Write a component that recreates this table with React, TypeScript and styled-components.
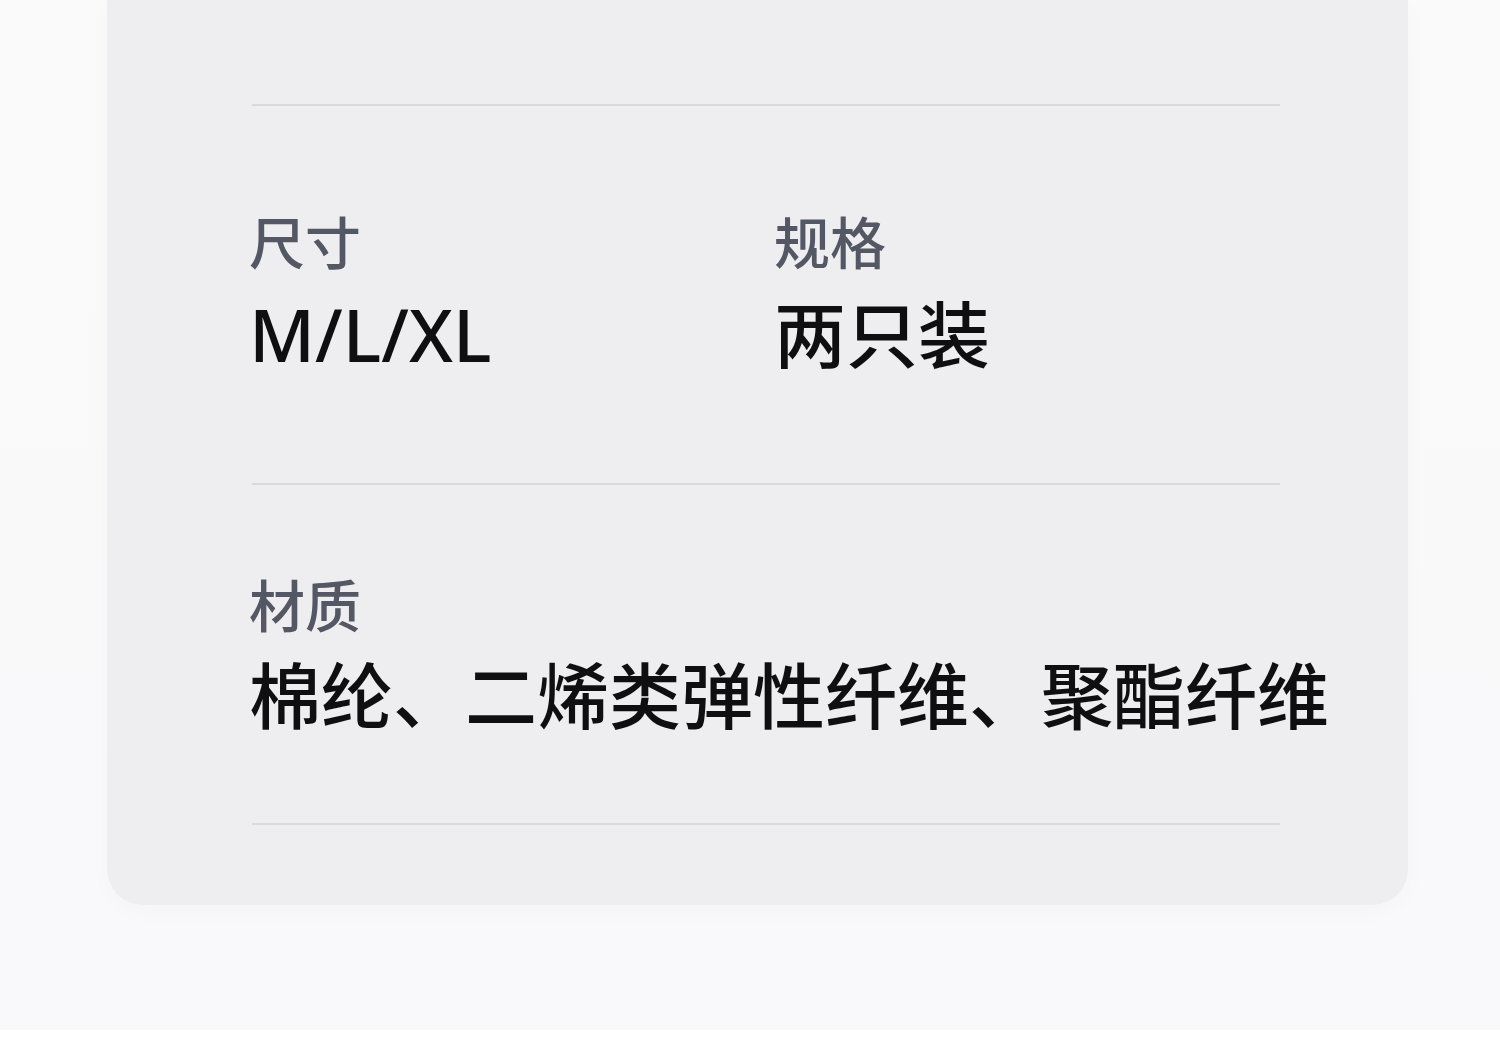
import React from "react";
import styled, { createGlobalStyle } from "styled-components";

const Global = createGlobalStyle`
  html, body { margin: 0; padding: 0; }
  body {
    background: #ffffff;
    font-family: "Noto Sans", "Noto Sans CJK SC", sans-serif;
  }
`;

const Page = styled.div`
  width: 1500px;
  height: 1030px;
  background: linear-gradient(#fafafa, #f9f9fb);
  display: flex;
  flex-direction: column;
  align-items: flex-start;
  padding-left: 107px;
  box-sizing: border-box;
`;

const Card = styled.div`
  width: 1301px;
  background: #eeeef0;
  border-radius: 0 0 36px 36px;
  box-shadow: 0 6px 24px rgba(0, 0, 0, 0.025);
  padding: 104px 128px 80px 145px;
  box-sizing: border-box;
  display: flex;
  flex-direction: column;
`;

const Divider = styled.div`
  height: 2px;
  background: #d9d9dc;
`;

const Section = styled.div<{ $top: number; $bottom: number }>`
  padding: ${(p) => p.$top}px 0 ${(p) => p.$bottom}px;
  margin-left: -3px;
  display: grid;
  grid-template-columns: 525px 1fr;
`;

const Field = styled.div<{ $gap: number }>`
  display: flex;
  flex-direction: column;
  gap: ${(p) => p.$gap}px;
`;

const Label = styled.div`
  font-family: "Noto Sans CJK SC", "Noto Sans", sans-serif;
  font-size: 56px;
  font-weight: 500;
  line-height: 67px;
  color: #545764;
  white-space: nowrap;
`;

const Value = styled.div`
  font-family: "Noto Sans", "Noto Sans CJK SC", sans-serif;
  font-size: 72px;
  font-weight: 500;
  line-height: 91px;
  color: #0f0f11;
  white-space: nowrap;
`;

export default function App() {
  return (
    <>
      <Global />
      <Page>
        <Card>
          <Divider />
          <Section $top={100} $bottom={103}>
            <Field $gap={16}>
              <Label>尺寸</Label>
              <Value>M/L/XL</Value>
            </Field>
            <Field $gap={16}>
              <Label>规格</Label>
              <Value>两只装</Value>
            </Field>
          </Section>
          <Divider />
          <Section $top={84} $bottom={82}>
            <Field $gap={14}>
              <Label>材质</Label>
              <Value>棉纶、二烯类弹性纤维、聚酯纤维</Value>
            </Field>
          </Section>
          <Divider />
        </Card>
      </Page>
    </>
  );
}
